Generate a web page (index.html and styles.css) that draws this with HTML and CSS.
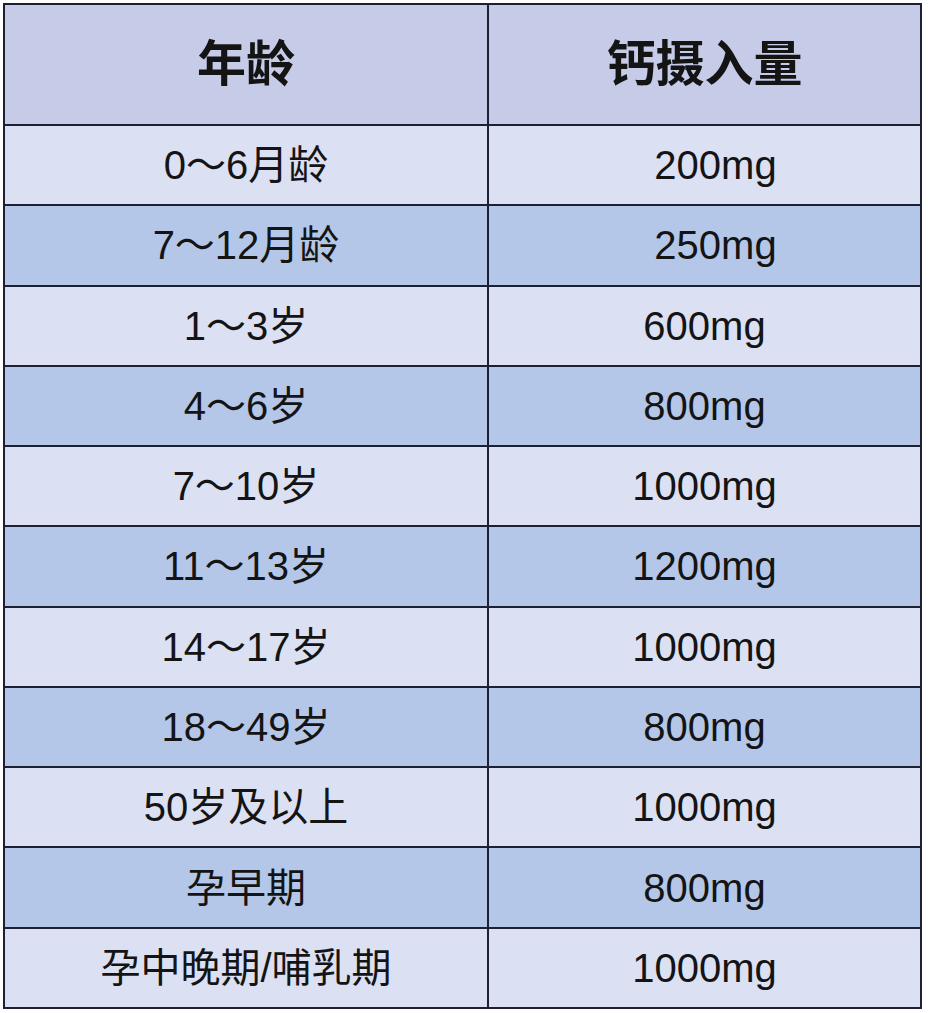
FILE: index.html
```html
<!DOCTYPE html>
<html lang="zh">
<head>
<meta charset="utf-8">
<title>钙摄入量</title>
<link rel="stylesheet" href="styles.css">
</head>
<body>
<div class="table">
  <div class="cell head">年龄</div>
  <div class="cell head">钙摄入量</div>

  <div class="cell light">0～6月龄</div>
  <div class="cell light shift">200mg</div>

  <div class="cell dark">7～12月龄</div>
  <div class="cell dark shift">250mg</div>

  <div class="cell light">1～3岁</div>
  <div class="cell light">600mg</div>

  <div class="cell dark">4～6岁</div>
  <div class="cell dark">800mg</div>

  <div class="cell light">7～10岁</div>
  <div class="cell light">1000mg</div>

  <div class="cell dark">11～13岁</div>
  <div class="cell dark">1200mg</div>

  <div class="cell light">14～17岁</div>
  <div class="cell light">1000mg</div>

  <div class="cell dark">18～49岁</div>
  <div class="cell dark">800mg</div>

  <div class="cell light">50岁及以上</div>
  <div class="cell light">1000mg</div>

  <div class="cell dark">孕早期</div>
  <div class="cell dark">800mg</div>

  <div class="cell light">孕中晚期/哺乳期</div>
  <div class="cell light">1000mg</div>
</div>
</body>
</html>
```
FILE: styles.css
```css
html, body {
  margin: 0;
  padding: 0;
  background: #ffffff;
}
body {
  padding: 3px 0 0 3px;
  font-family: "Liberation Sans", "Noto Sans CJK SC", sans-serif;
  color: #141414;
}
.table {
  width: 919px;
  height: 1006px;
  box-sizing: border-box;
  display: grid;
  grid-template-columns: 482px 1fr;
  grid-template-rows: 119px repeat(11, 1fr);
  gap: 2px;
  padding: 2px;
  background: #1d2033;
}
.cell {
  display: flex;
  align-items: center;
  justify-content: center;
  font-size: 40px;
  line-height: 1;
}
.head {
  background: #c6cbe8;
  font-size: 49px;
  font-weight: bold;
}
.light {
  background: #dbe0f2;
}
.dark {
  background: #b4c7e8;
}
.shift {
  padding-left: 22px;
}
```
